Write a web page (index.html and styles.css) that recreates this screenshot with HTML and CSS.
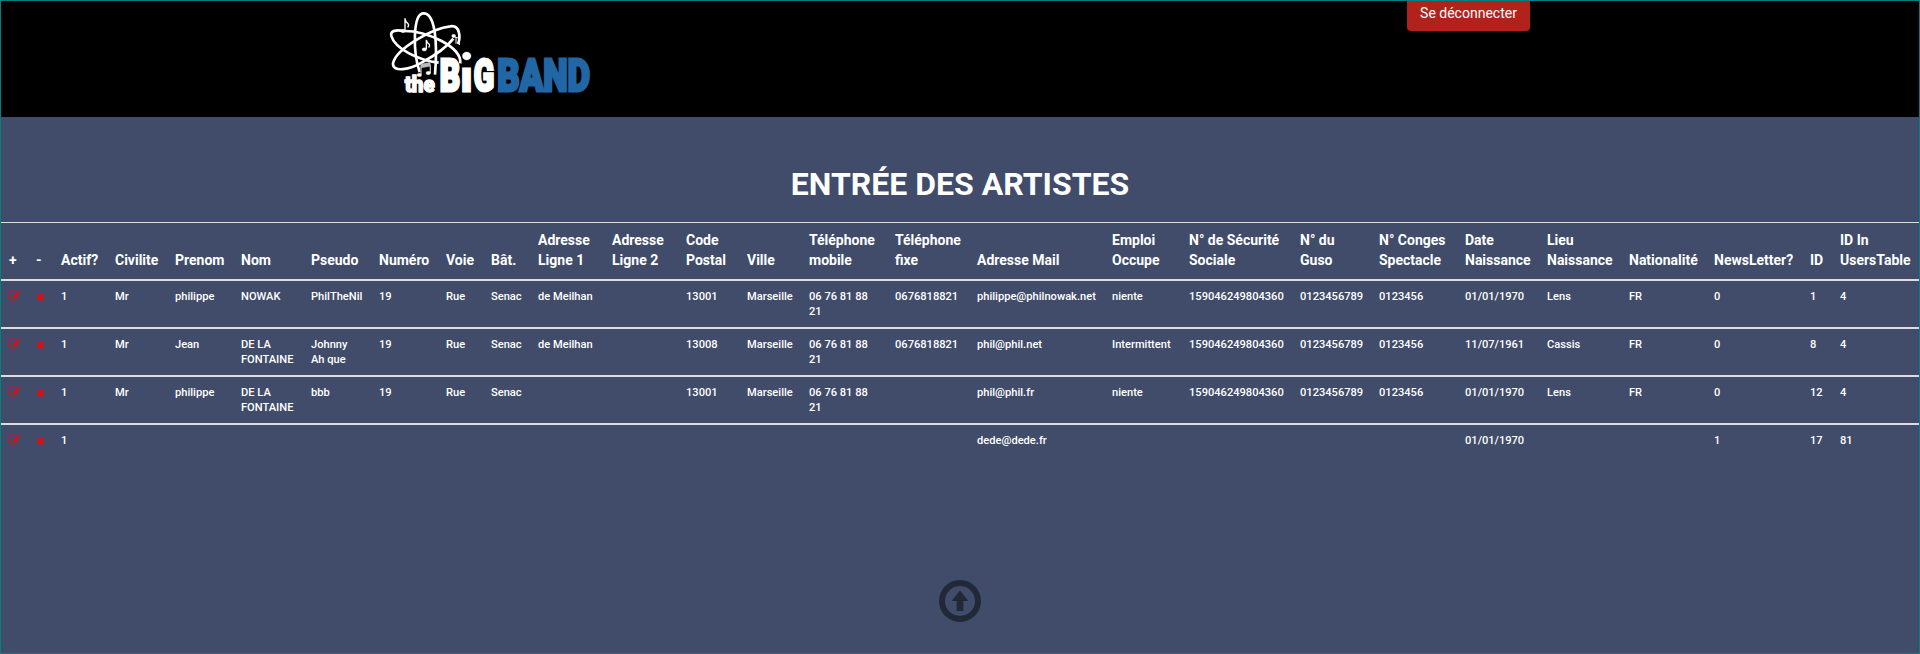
FILE: index.html
```html
<!DOCTYPE html>
<html lang="fr">
<head>
<meta charset="utf-8">
<title>The Big Band - Entrée des artistes</title>
<link rel="stylesheet" href="styles.css">
</head>
<body>
<svg width="0" height="0" class="defs" aria-hidden="true">
  <symbol id="edit" viewBox="0 0 1792 1792"><path d="M888 1184l116-116-152-152-116 116v56h96v96h56zm440-720q-16-16-33 1l-350 350q-17 17-1 33t33-1l350-350q17-17 1-33zm80 594v190q0 119-84.500 203.500t-203.500 84.500h-832q-119 0-203.500-84.500t-84.500-203.500v-832q0-119 84.500-203.500t203.500-84.500h832q63 0 117 25 15 7 18 23 3 17-9 29l-49 49q-14 14-32 8-23-6-45-6h-832q-66 0-113 47t-47 113v832q0 66 47 113t113 47h832q66 0 113-47t47-113v-126q0-13 9-22l64-64q15-15 35-7t20 29zm-96-738l288 288-672 672h-288v-288zm444 132l-92 92-288-288 92-92q28-28 68-28t68 28l152 152q28 28 28 68t-28 68z"/></symbol>
  <symbol id="remove" viewBox="110 110 1188 1188"><path d="M1298 1086q0 40-28 68l-136 136q-28 28-68 28t-68-28l-294-294-294 294q-28 28-68 28t-68-28l-136-136q-28-28-28-68t28-68l294-294-294-294q-28-28-28-68t28-68l136-136q28-28 68-28t68 28l294 294 294-294q28-28 68-28t68 28l136 136q28 28 28 68t-28 68l-294 294 294 294q28 28 28 68z"/></symbol>
</svg>
<header class="header">
  <svg class="logo" viewBox="0 0 660 348" role="img" aria-label="the Big Band">
    <g fill="none" stroke="#fff" stroke-width="8">
      <path d="M119 216C99 160 97 40 131 40C166 40 173 130 165 224"/>
      <path d="M234 132C242 112 240 74 211 79C160 84 48 145 39 190C37 219 92 208 125 188C160 169 200 142 220 116"/>
      <path d="M70 93C50 88 30 92 34 108C44 145 115 181 176 188M70 93C140 92 245 140 241 190"/>
    </g>
    <g fill="#fff" stroke="#fff">
      <ellipse cx="69" cy="93" rx="7" ry="5"/><path d="M75 92V55Q76 66 84 71Q88 76 83 82" fill="none" stroke-width="4"/>
      <ellipse cx="133" cy="148" rx="7" ry="5"/><path d="M139 147V120Q141 130 148 133Q150 138 146 143" fill="none" stroke-width="4"/>
      <ellipse cx="221" cy="108" rx="6" ry="5"/><path d="M225 111L238 115V135M228 112V131" fill="none" stroke-width="3"/>
      <path d="M122 192L151 187V199L122 204Z" fill="#bbb" stroke="#bbb"/><path d="M123 200V222M151 194V218" fill="none" stroke="#bbb" stroke-width="4"/>
      <ellipse cx="118" cy="225" rx="7" ry="5"/><ellipse cx="145" cy="219" rx="7" ry="5"/>
      <ellipse cx="260" cy="168" rx="13" ry="12"/>
    </g>
    <g class="logo-text">
      <text class="the" transform="translate(74 276) scale(.8 1)" font-size="67" textLength="113" lengthAdjust="spacingAndGlyphs">the</text>
      <text class="big" transform="translate(179 273) scale(.68 1)" font-size="133" textLength="90" lengthAdjust="spacingAndGlyphs">B</text>
      <text class="big" transform="translate(244 273) scale(.68 1)" font-size="120" textLength="46" lengthAdjust="spacingAndGlyphs">ı</text>
      <text class="big" transform="translate(281 273) scale(.68 1)" font-size="133" textLength="90" lengthAdjust="spacingAndGlyphs">G</text>
      <text class="band" transform="translate(352 273) scale(.77 1)" font-size="133" textLength="361" lengthAdjust="spacingAndGlyphs">BAND</text>
    </g>
  </svg>
  <a class="logout">Se déconnecter</a>
</header>
<main>
  <h2 class="title">ENTRÉE DES ARTISTES</h2>
  <table class="artists">
    <colgroup>
      <col class="w27"><col class="w25"><col class="w54"><col class="w60"><col class="w66"><col class="w70"><col class="w68"><col class="w67"><col class="w45"><col class="w47"><col class="w74"><col class="w74"><col class="w61"><col class="w62"><col class="w86"><col class="w82"><col class="w135"><col class="w77"><col class="w111"><col class="w79"><col class="w86"><col class="w82"><col class="w82"><col class="w85"><col class="w96"><col class="w30"><col class="w87">
    </colgroup>
    <thead>
      <tr><th>+</th><th>-</th><th>Actif?</th><th>Civilite</th><th>Prenom</th><th>Nom</th><th>Pseudo</th><th>Numéro</th><th>Voie</th><th>Bât.</th><th>Adresse<br>Ligne 1</th><th>Adresse<br>Ligne 2</th><th>Code<br>Postal</th><th>Ville</th><th>Téléphone<br>mobile</th><th>Téléphone<br>fixe</th><th>Adresse Mail</th><th>Emploi<br>Occupe</th><th>N° de Sécurité<br>Sociale</th><th>N° du<br>Guso</th><th>N° Conges<br>Spectacle</th><th>Date<br>Naissance</th><th>Lieu<br>Naissance</th><th>Nationalité</th><th>NewsLetter?</th><th>ID</th><th>ID In<br>UsersTable</th></tr>
    </thead>
    <tbody>
      <tr><td><svg class="edit"><use href="#edit"/></svg></td><td><svg class="remove"><use href="#remove"/></svg></td><td>1</td><td>Mr</td><td>philippe</td><td>NOWAK</td><td>PhilTheNil</td><td>19</td><td>Rue</td><td>Senac</td><td>de Meilhan</td><td></td><td>13001</td><td>Marseille</td><td>06 76 81 88<br>21</td><td>0676818821</td><td>philippe@philnowak.net</td><td>niente</td><td>159046249804360</td><td>0123456789</td><td>0123456</td><td>01/01/1970</td><td>Lens</td><td>FR</td><td>0</td><td>1</td><td>4</td></tr>
      <tr><td><svg class="edit"><use href="#edit"/></svg></td><td><svg class="remove"><use href="#remove"/></svg></td><td>1</td><td>Mr</td><td>Jean</td><td>DE LA<br>FONTAINE</td><td>Johnny<br>Ah que</td><td>19</td><td>Rue</td><td>Senac</td><td>de Meilhan</td><td></td><td>13008</td><td>Marseille</td><td>06 76 81 88<br>21</td><td>0676818821</td><td>phil@phil.net</td><td>Intermittent</td><td>159046249804360</td><td>0123456789</td><td>0123456</td><td>11/07/1961</td><td>Cassis</td><td>FR</td><td>0</td><td>8</td><td>4</td></tr>
      <tr><td><svg class="edit"><use href="#edit"/></svg></td><td><svg class="remove"><use href="#remove"/></svg></td><td>1</td><td>Mr</td><td>philippe</td><td>DE LA<br>FONTAINE</td><td>bbb</td><td>19</td><td>Rue</td><td>Senac</td><td></td><td></td><td>13001</td><td>Marseille</td><td>06 76 81 88<br>21</td><td></td><td>phil@phil.fr</td><td>niente</td><td>159046249804360</td><td>0123456789</td><td>0123456</td><td>01/01/1970</td><td>Lens</td><td>FR</td><td>0</td><td>12</td><td>4</td></tr>
      <tr><td><svg class="edit"><use href="#edit"/></svg></td><td><svg class="remove"><use href="#remove"/></svg></td><td>1</td><td></td><td></td><td></td><td></td><td></td><td></td><td></td><td></td><td></td><td></td><td></td><td></td><td></td><td>dede@dede.fr</td><td></td><td></td><td></td><td></td><td>01/01/1970</td><td></td><td></td><td>1</td><td>17</td><td>81</td></tr>
    </tbody>
  </table>
</main>
<footer class="footer">
  <svg class="top" viewBox="0 0 42 42"><circle cx="21" cy="21" r="18" fill="none" stroke="#212836" stroke-width="6"/><path d="M21 10.500L29.500 21H24.300V31H17.700V21H12.500Z" fill="#212836"/></svg>
</footer>
</body>
</html>
```
FILE: styles.css
```css
* { box-sizing: border-box; }

body {
  margin: 0;
  height: 654px;
  border: 1px solid #008080;
  background: #404c6a;
  color: #fff;
  font-family: Roboto, sans-serif;
  font-size: 14px;
  display: flex;
  flex-direction: column;
  overflow: hidden;
}

.defs { display: none; }

.header {
  height: 116px;
  flex: none;
  background: #000;
  padding: 0 389px 0 379px;
  display: flex;
  justify-content: space-between;
  align-items: flex-start;
}

.logo { width: 220px; height: 116px; margin-top: -1px; }
.logo-text { font-family: Roboto, sans-serif; font-weight: 900; stroke-width: 9; }
.the { fill: #fff; stroke: #fff; stroke-width: 4; }
.big { fill: #fff; stroke: #fff; }
.band { fill: #2166a5; stroke: #2166a5; }

.logout {
  width: 123px;
  height: 30px;
  padding-top: 2px;
  background: #b1221c;
  border-radius: 0 0 4px 4px;
  font-size: 14px;
  line-height: 20px;
  text-align: center;
}

.title {
  margin: 47px 0 17px;
  font-size: 32px;
  line-height: 41px;
  font-weight: 700;
  text-align: center;
}

.artists {
  width: 1918px;
  table-layout: fixed;
  border-collapse: separate;
  border-spacing: 0;
  border-top: 1px solid #ddd;
}

th, td { padding: 8px 0 8px 8px; text-align: left; white-space: nowrap; }
th { padding: 7px 0 9px 8px; font-size: 14px; line-height: 20px; font-weight: 700; vertical-align: bottom; }
td { border-top: 2px solid #ddd; font-size: 11.12px; line-height: 15px; font-weight: 500; vertical-align: top; }

td svg { display: block; fill: #f00; }
.edit { width: 12px; height: 12px; margin: 1px 0 0 -1px; }
.remove { width: 7px; height: 8px; margin: 4px 0 0 1px; }

.w25 { width: 25px; } .w27 { width: 27px; } .w30 { width: 30px; }
.w45 { width: 45px; } .w47 { width: 47px; } .w54 { width: 54px; }
.w60 { width: 60px; } .w61 { width: 61px; } .w62 { width: 62px; }
.w66 { width: 66px; } .w67 { width: 67px; } .w68 { width: 68px; }
.w70 { width: 70px; } .w74 { width: 74px; } .w77 { width: 77px; }
.w79 { width: 79px; } .w82 { width: 82px; } .w85 { width: 85px; }
.w86 { width: 86px; } .w87 { width: 87px; } .w96 { width: 96px; }
.w111 { width: 111px; } .w135 { width: 135px; }

.footer { margin-top: auto; height: 73px; flex: none; display: flex; justify-content: center; }
.top { width: 42px; height: 42px; }
```
